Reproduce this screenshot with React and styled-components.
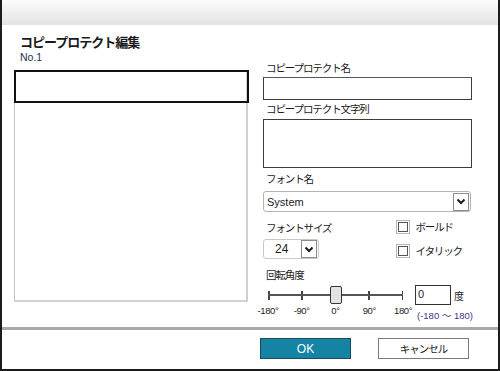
import React from 'react';
import styled, { createGlobalStyle } from 'styled-components';

const jp = `'Liberation Sans', 'Noto Sans CJK JP', sans-serif`;

const GlobalStyle = createGlobalStyle`
    html, body {
        margin: 0;
        padding: 0;
        background: #ffffff;
    }
    * {
        box-sizing: border-box;
    }
`;

const ticks = ['-180°', '-90°', '0°', '90°', '180°'];

const Chevron = () => (
    <svg width="10" height="7" viewBox="0 0 10 7">
        <polyline points="1.5,1.5 5,5 8.5,1.5" fill="none" stroke="#1a1a1a" strokeWidth="2" />
    </svg>
);

export default function App() {
    const angle = 0;
    const thumbLeft = ((angle + 180) / 360) * 135 - 6;

    return (
        <>
            <GlobalStyle />
            <Window>
                <TitleBar />
                <Body>
                    <LeftCol>
                        <Heading>コピープロテクト編集</Heading>
                        <SubHeading>No.1</SubHeading>
                        <ListBox>
                            <ListRow selected />
                        </ListBox>
                    </LeftCol>
                    <RightCol>
                        <Label>コピープロテクト名</Label>
                        <TextBox gap={2} />
                        <Label gap={2}>コピープロテクト文字列</Label>
                        <TextArea />
                        <Label gap={4}>フォント名</Label>
                        <Select>
                            <SelectValue>System</SelectValue>
                            <DropButton><Chevron /></DropButton>
                        </Select>
                        <OptionsRow>
                            <div>
                                <Label gap={0}>フォントサイズ</Label>
                                <SizeSelect>
                                    <SizeValue>24</SizeValue>
                                    <DropButton><Chevron /></DropButton>
                                </SizeSelect>
                            </div>
                            <CheckList>
                                <CheckItem><CheckBox /><CheckText>ボールド</CheckText></CheckItem>
                                <CheckItem><CheckBox /><CheckText>イタリック</CheckText></CheckItem>
                            </CheckList>
                        </OptionsRow>
                        <Label gap={9}>回転角度</Label>
                        <AngleRow>
                            <Slider>
                                <Track>
                                    {ticks.map((t) => <Tick key={t} />)}
                                    <Thumb style={{ left: thumbLeft }} />
                                </Track>
                                <TickLabels>
                                    {ticks.map((t) => <TickLabel key={t}>{t}</TickLabel>)}
                                </TickLabels>
                            </Slider>
                            <AngleBox>
                                <AngleInputRow>
                                    <AngleInput>{angle}</AngleInput>
                                    <Unit>度</Unit>
                                </AngleInputRow>
                                <RangeText>(-180 〜 180)</RangeText>
                            </AngleBox>
                        </AngleRow>
                    </RightCol>
                </Body>
                <Separator />
                <Footer>
                    <Button primary>OK</Button>
                    <Button>キャンセル</Button>
                </Footer>
            </Window>
        </>
    );
}

const Window = styled.div`
    width: 500px;
    height: 371px;
    display: flex;
    flex-direction: column;
    border-left: 2px solid #1c1c1c;
    border-right: 2px solid #1c1c1c;
    border-bottom: 2px solid #1c1c1c;
    background: #ffffff;
    font-family: ${jp};
    color: #1a1a1a;
    overflow: hidden;
`;

const TitleBar = styled.div`
    height: 25px;
    flex: none;
    background: linear-gradient(#fcfcfc, #e3e3e3);
`;

const Body = styled.div`
    height: 302px;
    flex: none;
    display: grid;
    grid-template-columns: 235px 209px;
    column-gap: 14px;
    padding-left: 12px;
`;

const LeftCol = styled.div`
    display: flex;
    flex-direction: column;
    padding-top: 10px;
`;

const Heading = styled.div`
    padding-left: 6px;
    font-size: 13px;
    line-height: 16px;
    font-weight: bold;
    letter-spacing: -1px;
`;

const SubHeading = styled.div`
    padding-left: 6px;
    font-family: 'Liberation Sans', sans-serif;
    font-size: 10.5px;
    line-height: 12px;
    color: #1f3050;
    margin-bottom: 7px;
`;

const ListBox = styled.div`
    height: 232px;
    width: 234px;
    border: 1px solid #c4c4c4;
    border-right-width: 2px;
    border-bottom-width: 2px;
    border-right-color: #d0d0d0;
    border-bottom-color: #d0d0d0;
    position: relative;
`;

const ListRow = styled.div`
    position: absolute;
    left: -1px;
    top: -1px;
    width: 235px;
    height: 33px;
    border: 2px solid ${(p) => (p.selected ? '#111111' : 'transparent')};
`;

const RightCol = styled.div`
    display: flex;
    flex-direction: column;
    padding-top: 36px;
`;

const Label = styled.div`
    margin-top: ${(p) => p.gap || 0}px;
    padding-left: 3px;
    font-size: 10.5px;
    line-height: 14px;
    letter-spacing: -1.1px;
    white-space: nowrap;
`;

const TextBox = styled.div`
    margin-top: ${(p) => p.gap || 0}px;
    height: 23px;
    border: 1px solid #3c3c3c;
    border-top-color: #555;
    background: #fff;
`;

const TextArea = styled.div`
    margin-top: 3px;
    height: 49px;
    border: 1px solid #3c3c3c;
    background: #fff;
`;

const Select = styled.div`
    margin-top: 5px;
    width: 208px;
    height: 21px;
    display: flex;
    align-items: center;
    justify-content: space-between;
    border: 1px solid #b4b4b4;
    border-radius: 3px;
    padding: 0 1px 0 3px;
`;

const SelectValue = styled.span`
    font-family: 'Liberation Sans', sans-serif;
    font-size: 11px;
    color: #1a1a2a;
`;

const DropButton = styled.span`
    width: 16px;
    height: 18px;
    display: flex;
    align-items: center;
    justify-content: center;
    border: 1px solid #8c8c8c;
    background: #ffffff;
`;

const OptionsRow = styled.div`
    margin-top: 9px;
    display: flex;
    justify-content: space-between;
    padding-right: 10px;
`;

const SizeSelect = styled.div`
    margin-top: 4px;
    width: 56px;
    height: 20px;
    display: flex;
    align-items: center;
    justify-content: space-between;
    border: 1px solid #c8c8c8;
    border-radius: 3px;
    padding: 0 1px 0 11px;
`;

const SizeValue = styled.span`
    font-family: 'Liberation Sans', sans-serif;
    font-size: 12px;
`;

const CheckList = styled.div`
    display: flex;
    flex-direction: column;
    gap: 9px;
    margin-top: -2px;
`;

const CheckItem = styled.div`
    display: flex;
    align-items: center;
    gap: 5px;
`;

const CheckBox = styled.span`
    width: 14px;
    height: 14px;
    border: 1px solid #b8b8b8;
    display: flex;
    align-items: center;
    justify-content: center;
    &::after {
        content: '';
        width: 8px;
        height: 8px;
        border: 1px solid #555;
        background: #fff;
    }
`;

const CheckText = styled.span`
    font-size: 10.5px;
    letter-spacing: -1.1px;
`;

const AngleRow = styled.div`
    margin-top: 3px;
    display: flex;
    align-items: flex-start;
`;

const Slider = styled.div`
    width: 169px;
    margin-left: -12px;
    display: flex;
    flex-direction: column;
`;

const Track = styled.div`
    position: relative;
    margin: 0 17px;
    height: 20px;
    display: flex;
    align-items: center;
    justify-content: space-between;
    &::before {
        content: '';
        position: absolute;
        left: 0;
        right: 0;
        top: 9px;
        height: 1.5px;
        background: #555555;
    }
`;

const Tick = styled.span`
    width: 1.5px;
    height: 9px;
    background: #444444;
`;

const Thumb = styled.span`
    position: absolute;
    top: 1px;
    width: 12px;
    height: 18px;
    border: 1px solid #333;
    border-radius: 2px;
    background: #e2e2e2;
`;

const TickLabels = styled.div`
    display: flex;
    justify-content: space-between;
    margin-top: 0;
`;

const TickLabel = styled.span`
    width: 34px;
    text-align: center;
    font-family: 'Liberation Sans', sans-serif;
    font-size: 9.5px;
    letter-spacing: -0.4px;
    color: #222;
`;

const AngleBox = styled.div`
    margin-left: -5px;
    display: flex;
    flex-direction: column;
`;

const AngleInputRow = styled.div`
    display: flex;
    align-items: center;
    gap: 3px;
`;

const AngleInput = styled.div`
    width: 36px;
    height: 20px;
    border: 1.5px solid #333;
    padding-left: 2px;
    font-family: 'Liberation Sans', sans-serif;
    font-size: 11px;
    line-height: 17px;
    color: #1a1a3a;
`;

const Unit = styled.span`
    font-size: 10px;
`;

const RangeText = styled.span`
    margin-top: 3px;
    padding-left: 2px;
    font-family: 'Liberation Sans', 'Noto Sans CJK JP', sans-serif;
    font-size: 9.5px;
    color: #4b2f8a;
    white-space: nowrap;
`;

const Separator = styled.div`
    height: 3px;
    flex: none;
    background: #a9a9a9;
`;

const Footer = styled.div`
    flex: 1;
    display: flex;
    justify-content: flex-end;
    align-items: flex-start;
    gap: 27px;
    padding: 8px 29px 0 0;
`;

const Button = styled.div`
    width: 91px;
    height: 21px;
    display: flex;
    align-items: center;
    justify-content: center;
    border: 1px solid ${(p) => (p.primary ? '#1d4a5e' : '#7a7a7a')};
    background: ${(p) => (p.primary ? '#1583a4' : '#ffffff')};
    color: ${(p) => (p.primary ? '#ffffff' : '#222222')};
    font-family: ${jp};
    font-size: ${(p) => (p.primary ? '12px' : '10.5px')};
    letter-spacing: ${(p) => (p.primary ? '0' : '-1px')};
`;
